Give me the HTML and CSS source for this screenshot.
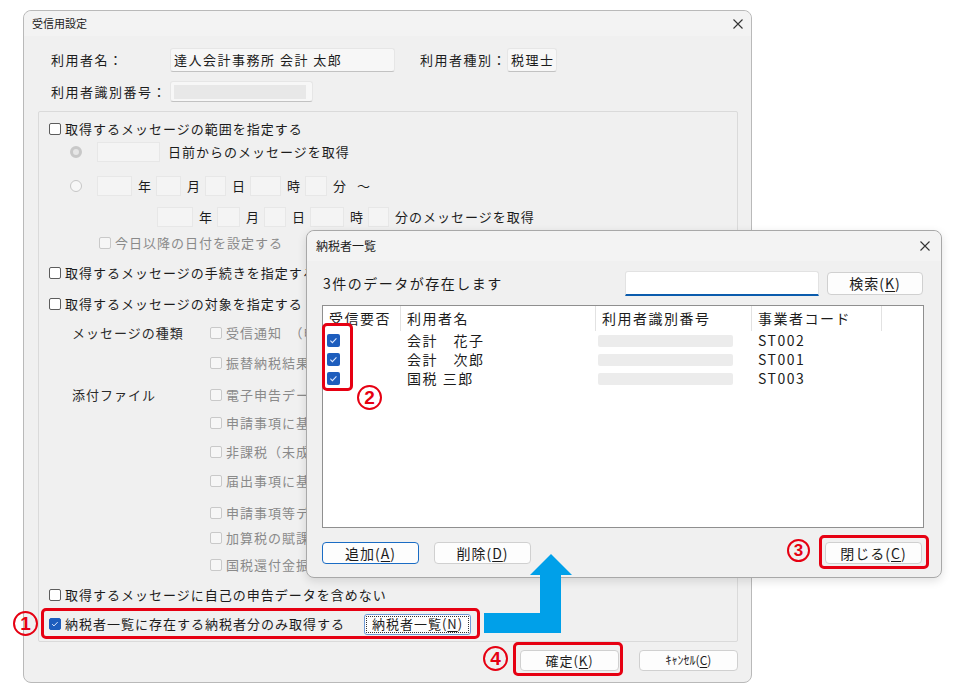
FILE: index.html
```html
<!DOCTYPE html>
<html lang="ja">
<head>
<meta charset="utf-8">
<title>受信用設定</title>
<link rel="stylesheet" href="styles.css">
</head>
<body>
<div class="stage">
  <div class="main">
    <div class="titlebar">
      <span>受信用設定</span>
      <svg class="close" width="10" height="10" viewBox="0 0 10 10"><path d="M0.5 0.5L9.5 9.5M9.5 0.5L0.5 9.5" stroke="#333" stroke-width="1.1"/></svg>
    </div>
    <div class="info">
      <div class="irow r1">
        <span class="lbl">利用者名：</span>
        <span class="fld fname">達人会計事務所 会計 太郎</span>
        <span class="lbl2">利用者種別：</span>
        <span class="fld fkind">税理士</span>
      </div>
      <div class="irow r2">
        <span class="lbl">利用者識別番号：</span>
        <span class="fld fid"><span class="mask"></span></span>
      </div>
    </div>
    <div class="panel">
      <div class="pr p-cb"><span class="cb"></span><span class="t">取得するメッセージの範囲を指定する</span></div>
      <div class="pr p-rd"><span class="rd sel"></span><span class="in w63 ml15"></span><span class="t ml8">日前からのメッセージを取得</span></div>
      <div class="pr p-rd"><span class="rd"></span><span class="in w35 ml15"></span><span class="u">年</span><span class="in w25"></span><span class="u">月</span><span class="in w21"></span><span class="u">日</span><span class="in w31"></span><span class="u">時</span><span class="in w22"></span><span class="u">分</span><span class="u">～</span></div>
      <div class="pr p-date"><span class="in w36"></span><span class="u">年</span><span class="in w23"></span><span class="u">月</span><span class="in w22"></span><span class="u">日</span><span class="in w34"></span><span class="u">時</span><span class="in w21"></span><span class="t ml6">分のメッセージを取得</span></div>
      <div class="pr p-today g"><span class="cb dis"></span><span class="t">今日以降の日付を設定する</span></div>
      <div class="pr p-cb"><span class="cb"></span><span class="t">取得するメッセージの手続きを指定する</span></div>
      <div class="pr p-cb"><span class="cb"></span><span class="t">取得するメッセージの対象を指定する</span></div>
      <div class="pr p-sub"><span class="k">メッセージの種類</span><span class="cb dis"></span><span class="t g">受信通知　（申告・申請・納付）</span></div>
      <div class="pr p-sub"><span class="k"></span><span class="cb dis"></span><span class="t g">振替納税結果</span></div>
      <div class="pr p-sub"><span class="k">添付ファイル</span><span class="cb dis"></span><span class="t g">電子申告データ</span></div>
      <div class="pr p-sub"><span class="k"></span><span class="cb dis"></span><span class="t g">申請事項に基づく通知</span></div>
      <div class="pr p-sub"><span class="k"></span><span class="cb dis"></span><span class="t g">非課税（未成年者）</span></div>
      <div class="pr p-sub"><span class="k"></span><span class="cb dis"></span><span class="t g">届出事項に基づく通知</span></div>
      <div class="pr p-sub"><span class="k"></span><span class="cb dis"></span><span class="t g">申請事項等データ</span></div>
      <div class="pr p-sub"><span class="k"></span><span class="cb dis"></span><span class="t g">加算税の賦課決定通知</span></div>
      <div class="pr p-sub"><span class="k"></span><span class="cb dis"></span><span class="t g">国税還付金振込通知</span></div>
      <div class="pr p-cb"><span class="cb"></span><span class="t">取得するメッセージに自己の申告データを含めない</span></div>
      <div class="pr p-cb"><span class="cb on"><svg viewBox="0 0 12 12" width="10" height="10"><path d="M2.6 6.2l2.2 2.1 4.4-4.6" stroke="#dbe7ff" stroke-width="1.2" fill="none"/></svg></span><span class="t">納税者一覧に存在する納税者分のみ取得する</span><span class="btn mbtn">納税者一覧(<u>N</u>)</span></div>
    </div>
    <div class="foot">
      <span class="btn fbtn">確定(<u>K</u>)</span>
      <span class="btn fbtn kana">ｷｬﾝｾﾙ(<u>C</u>)</span>
    </div>
  </div>

  <div class="dlg">
    <div class="dtitle">
      <span>納税者一覧</span>
      <svg class="close" width="10" height="10" viewBox="0 0 10 10"><path d="M0.5 0.5L9.5 9.5M9.5 0.5L0.5 9.5" stroke="#333" stroke-width="1.1"/></svg>
    </div>
    <div class="dbody">
      <div class="count">
        <span class="ctext">3件のデータが存在します</span>
        <span class="search"></span>
        <span class="btn sbtn">検索(<u>K</u>)</span>
      </div>
      <div class="tbl">
        <div class="th"><div>受信要否</div><div>利用者名</div><div>利用者識別番号</div><div>事業者コード</div><div class="last"></div></div>
        <div class="tr"><div class="c1"><span class="cbx"><svg viewBox="0 0 12 12" width="11" height="11"><path d="M2.6 6.2l2.2 2.1 4.4-4.6" stroke="#dbe7ff" stroke-width="1.2" fill="none"/></svg></span></div><div>会計　花子</div><div class="c3"><span class="bar"></span></div><div class="code">ST002</div><div></div></div>
        <div class="tr"><div class="c1"><span class="cbx"><svg viewBox="0 0 12 12" width="11" height="11"><path d="M2.6 6.2l2.2 2.1 4.4-4.6" stroke="#dbe7ff" stroke-width="1.2" fill="none"/></svg></span></div><div>会計　次郎</div><div class="c3"><span class="bar"></span></div><div class="code">ST001</div><div></div></div>
        <div class="tr"><div class="c1"><span class="cbx"><svg viewBox="0 0 12 12" width="11" height="11"><path d="M2.6 6.2l2.2 2.1 4.4-4.6" stroke="#dbe7ff" stroke-width="1.2" fill="none"/></svg></span></div><div>国税 三郎</div><div class="c3"><span class="bar"></span></div><div class="code">ST003</div><div></div></div>
      </div>
      <div class="dbtns">
        <span class="btn dbtn focus">追加(<u>A</u>)</span>
        <span class="btn dbtn">削除(<u>D</u>)</span>
        <span class="btn dbtn closebtn">閉じる(<u>C</u>)</span>
      </div>
    </div>
  </div>

  <svg class="arrow" width="960" height="694" viewBox="0 0 960 694"><polygon points="484,613 540,613 540,575 530,575 551,554 572,575 561,575 561,633 484,633" fill="#00a0e9"/></svg>

  <span class="rbox rb1"></span>
  <span class="rbox rb2"></span>
  <span class="rbox rb3"></span>
  <span class="rbox rb4"></span>
  <span class="num n1">1</span>
  <span class="num n2">2</span>
  <span class="num n3">3</span>
  <span class="num n4">4</span>
</div>
</body>
</html>
```
FILE: styles.css
```css
* { box-sizing: border-box; }
body {
  margin: 0;
  background: #fff;
  font-family: "Noto Sans CJK JP", "Noto Sans", sans-serif;
  font-size: 13px;
  line-height: 1.2;
  color: #1c1c1c;
}
.stage { position: relative; width: 960px; height: 694px; overflow: hidden; }

/* main window */
.main {
  margin: 10px 0 0 23px;
  width: 729px;
  height: 673px;
  border: 1px solid #b9b9b9;
  border-radius: 8px;
  background: #f0f0f0;
  display: flex;
  flex-direction: column;
}
.titlebar {
  height: 25px;
  flex: none;
  display: flex;
  align-items: center;
  justify-content: space-between;
  padding: 0 8px 0 8px;
  font-size: 11px;
  color: #222;
  background: #f3f3f3;
  border-radius: 8px 8px 0 0;
}
.info { padding: 12px 0 0 27px; }
.irow { display: flex; align-items: center; }
.r1 { height: 24px; }
.r2 { height: 21px; margin-top: 9px; }
.lbl { width: 119px; letter-spacing: 1.5px; }
.lbl2 { margin-left: 25px; width: 87px; letter-spacing: 1.5px; }
.fld {
  height: 100%;
  display: flex;
  align-items: center;
  padding-left: 3px;
  background: #f7f7f7;
  border: 1px solid #e6e6e6;
  border-bottom-color: #c2c2c2;
  border-radius: 3px;
  letter-spacing: 1.5px;
}
.fname { width: 225px; }
.fkind { width: 50px; }
.fid { width: 143px; padding: 2px 3px; }
.mask { display: block; width: 132px; height: 14px; background: #e8e8e8; }

/* panel */
.panel {
  margin: 9px 0 0 14px;
  width: 700px;
  height: 531px;
  flex: none;
  border: 1px solid #dadada;
  border-radius: 2px;
  padding-top: 6px;
  display: grid;
  grid-template-rows: 22px 24px 44px 18px 34px 26px 36px 22px 38px 26px 30px 28px 30px 34px 16px 38px 22px 36px;
  align-items: center;
}
.pr { display: flex; align-items: center; height: 20px; white-space: nowrap; }
.t { letter-spacing: 1px; }
.g { color: #8a8a8a; }
.p-cb { padding-left: 10px; }
.p-rd { padding-left: 31px; }
.p-date { padding-left: 118px; }
.p-today { padding-left: 60px; }
.p-sub { padding-left: 33px; }
.k { width: 138px; flex: none; letter-spacing: 1px; color: #2a2a2a; }

.cb {
  width: 12px; height: 12px; flex: none;
  border: 1px solid #5c5c5c;
  border-radius: 2px;
  background: #fff;
  margin-right: 4px;
  display: flex; align-items: center; justify-content: center;
}
.cb.dis { border-color: #c9c9c9; background: #f6f6f6; }
.cb.on { background: #1d5dbd; border-color: #1d5dbd; }
.rd {
  width: 12px; height: 12px; flex: none;
  border-radius: 50%;
  border: 1px solid #c6c6c6;
  background: #f7f7f7;
}
.rd.sel { border: 3px solid #c8c8c8; background: #e6e6e6; }
.in {
  height: 20px; flex: none;
  background: #f4f4f4;
  border: 1px solid #e7e7e7;
}
.u { margin: 0 5px 0 6px; }
.ml15 { margin-left: 15px; }
.ml8 { margin-left: 8px; }
.ml6 { margin-left: 6px; }
.w21 { width: 21px; } .w22 { width: 22px; } .w23 { width: 23px; } .w25 { width: 25px; }
.w31 { width: 31px; } .w34 { width: 34px; } .w35 { width: 35px; } .w36 { width: 36px; } .w63 { width: 63px; }

.btn {
  display: flex; align-items: center; justify-content: center;
  background: #fdfdfd;
  border: 1px solid #d0d0d0;
  border-radius: 4px;
  letter-spacing: 1px;
  white-space: nowrap;
}
.btn u { text-decoration: underline; text-underline-offset: 2px; }
.mbtn {
  margin-left: 19px;
  width: 107px; height: 21px;
  border: 1px solid #6f9ad6;
  border-radius: 3px;
  outline: 1px dotted #333;
  outline-offset: -3px;
}
.foot {
  margin-top: 8px;
  display: flex;
  justify-content: flex-end;
  gap: 20px;
  padding-right: 13px;
}
.fbtn { width: 99px; height: 21px; font-size: 13px; }
.kana { letter-spacing: 0; font-size: 12px; }

/* dialog */
.dlg {
  position: absolute;
  left: 306px; top: 230px;
  width: 636px; height: 348px;
  border: 1px solid #a8a8a8;
  border-radius: 8px;
  background: #f0f0f0;
  box-shadow: 0 3px 10px rgba(0,0,0,0.12);
  display: flex;
  flex-direction: column;
}
.dtitle {
  height: 30px; flex: none;
  display: flex; align-items: center; justify-content: space-between;
  padding: 0 11px 0 9px;
  font-size: 12px;
  background: #f3f3f3;
  border-radius: 8px 8px 0 0;
}
.dbody { padding: 10px 17px 0 15px; font-size: 14px; }
.count { height: 25px; display: flex; align-items: center; }
.ctext { padding-left: 1px; letter-spacing: 1.5px; }
.search {
  margin-left: auto;
  width: 194px; height: 25px;
  background: #fff;
  border: 1px solid #e2e2e2;
  border-bottom: 2px solid #0b5cad;
  border-radius: 3px 3px 0 0;
}
.sbtn { margin: 0 1px 0 8px; width: 96px; height: 23px; font-size: 14px; }
.tbl {
  margin-top: 9px;
  height: 223px;
  border: 1px solid #8f8f8f;
  background: #fff;
}
.th, .tr { display: grid; grid-template-columns: 78px 195px 156px 130px 1fr; }
.th { height: 25px; }
.th > div {
  border-right: 1px solid #e2e2e2;
  display: flex; align-items: center;
  padding-left: 6px;
  letter-spacing: 1.5px;
}
.th > div.last { border-right: none; }
.tr { height: 19px; align-items: center; }
.tr > div { padding-left: 6px; letter-spacing: 1.5px; white-space: nowrap; }
.tr > div.c1 { padding-left: 4px; display: flex; }
.tr > div.c3 { padding-left: 2px; display: flex; }
.code { letter-spacing: 0.5px; }
.cbx {
  width: 13px; height: 13px;
  background: #1d5dbd;
  border-radius: 2px;
  display: flex; align-items: center; justify-content: center;
}
.bar { display: block; width: 135px; height: 12px; background: #ececec; border-radius: 2px; }
.dbtns { margin-top: 14px; display: flex; align-items: center; }
.dbtn { height: 22px; width: 97px; font-size: 14px; }
.dbtn + .dbtn { margin-left: 15px; }
.dbtn.focus { border-color: #1a6cc4; }
.closebtn { margin-left: auto !important; margin-right: 2px; }

/* annotations */
.arrow { position: absolute; left: 0; top: 0; }
.rbox {
  position: absolute;
  border: 3px solid #e60012;
  border-radius: 5px;
}
.rb1 { left: 41px; top: 608px; width: 439px; height: 31px; }
.rb2 { left: 322px; top: 323px; width: 31px; height: 68px; }
.rb3 { left: 819px; top: 535px; width: 110px; height: 34px; }
.rb4 { left: 513px; top: 642px; width: 110px; height: 34px; }
.num {
  position: absolute;
  width: 25px; height: 25px;
  border: 2px solid #e60012;
  border-radius: 50%;
  color: #e60012;
  font: bold 19px/21px "Liberation Sans", sans-serif;
  text-align: center;
}
.n1 { left: 13px; top: 611px; }
.n2 { left: 357px; top: 385px; }
.n3 { left: 787px; top: 539px; width: 23px; height: 23px; font-size: 17px; line-height: 19px; }
.n4 { left: 483px; top: 646px; }
```
